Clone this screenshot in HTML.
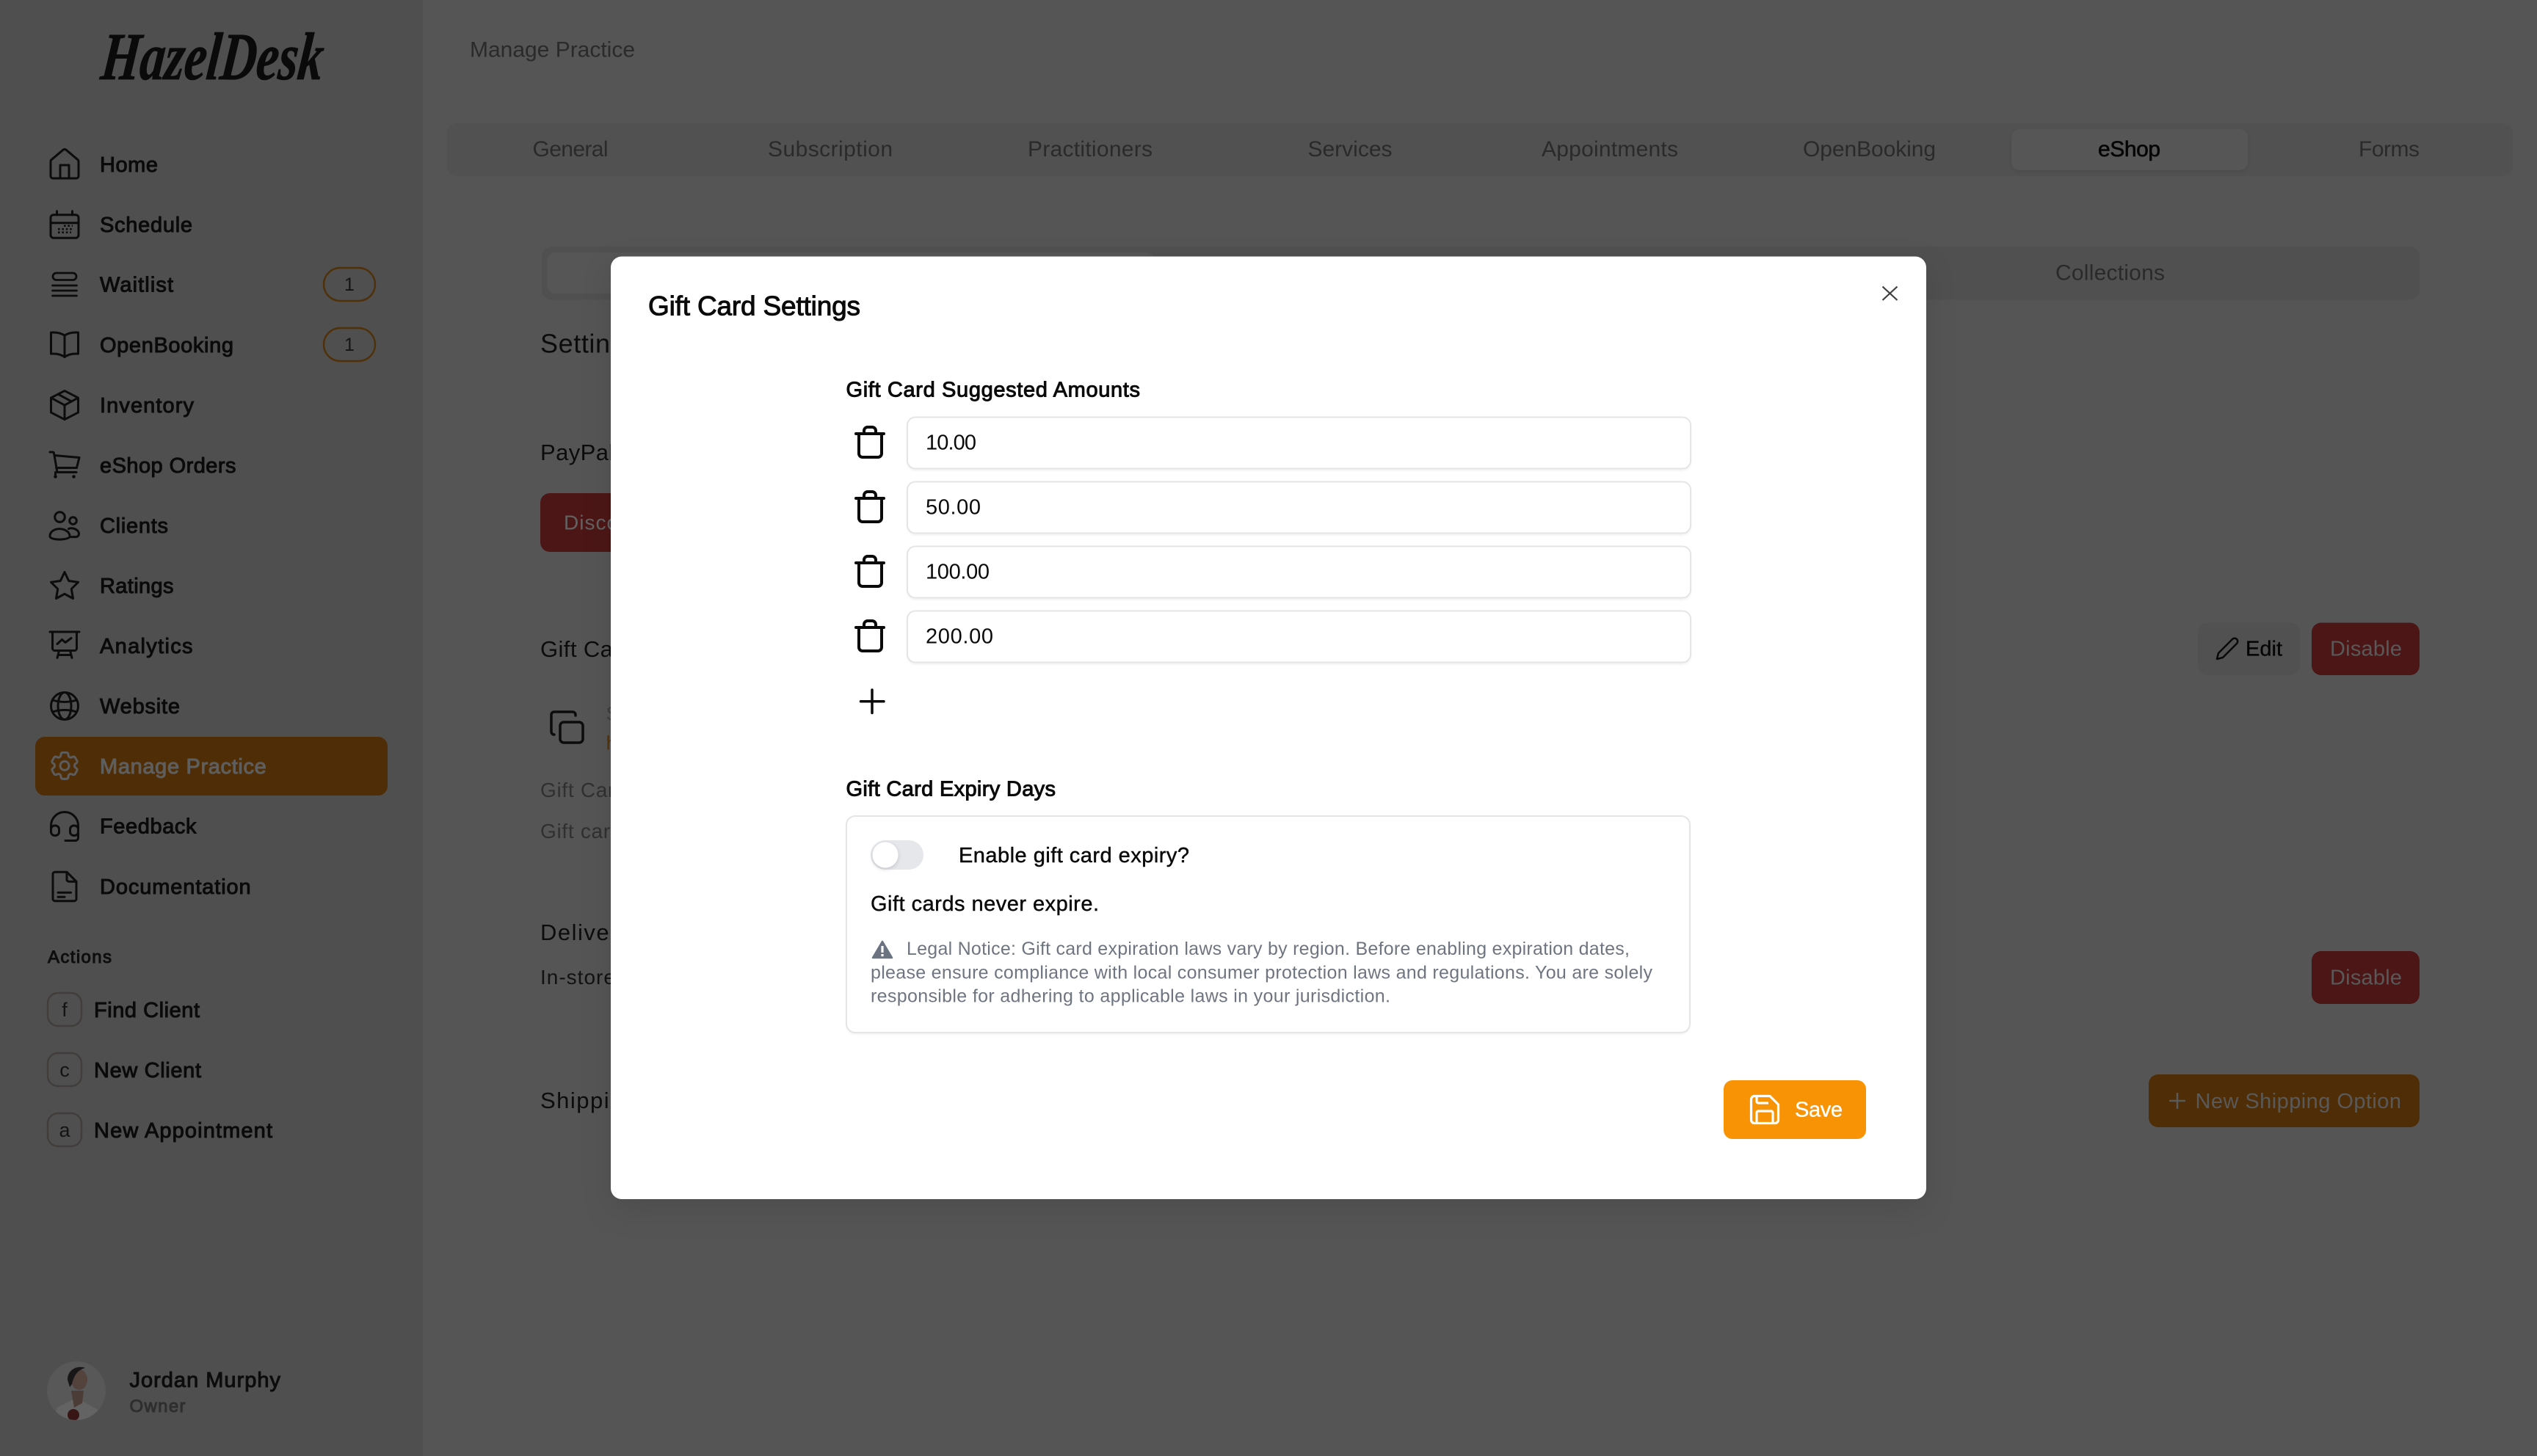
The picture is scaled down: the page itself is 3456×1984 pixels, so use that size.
<!DOCTYPE html>
<html lang="en"><head><meta charset="utf-8"><title>HazelDesk - Gift Card Settings</title>
<style>
html,body{margin:0;padding:0;background:#555;width:3456px;height:1984px;overflow:hidden}
svg{display:block}
text{font-family:"Liberation Sans",sans-serif;fill:currentColor;white-space:pre}
.m{stroke:currentColor;stroke-width:1px}
.n{font-size:29px;color:#0a0a0a}
.tab{font-size:30px;color:#2a2a2a}
.ic{fill:none;stroke:#0c0c0c;stroke-width:3;stroke-linecap:round;stroke-linejoin:round}
.bg32{font-size:31px;color:#0c0c0c;letter-spacing:1.2px}
.lab{font-size:29px;color:#0a0a0a}
.val{font-size:29px;color:#0a0a0a}
.leg{font-size:25px;color:#6f7580}
.tr{fill:none;stroke:#0a0a0a;stroke-width:4;stroke-linecap:round;stroke-linejoin:round}
</style></head><body>
<svg xmlns="http://www.w3.org/2000/svg" width="3456" height="1984" viewBox="0 0 3456 1984">
<defs>
<clipPath id="av"><circle cx="104" cy="1895" r="40"/></clipPath>
<g id="trash"><path class="tr" d="M1166 591H1204M1177 591V587a5 5 0 0 1 5-5h6a5 5 0 0 1 5 5V591M1170 591V618a5 5 0 0 0 5 5h21a5 5 0 0 0 5-5V591"/></g>
</defs>

<!-- backgrounds -->
<rect width="3456" height="1984" fill="#555"/>
<rect width="576" height="1984" fill="#4f4f4f"/>

<!-- logo -->
<text x="147" y="108" font-size="92" font-weight="700" font-style="italic" transform="skewX(-6)" style="font-family:'Liberation Serif',serif;color:#0a0a0a;stroke:currentColor;stroke-width:.8px" textLength="302" lengthAdjust="spacingAndGlyphs">HazelDesk</text>

<!-- nav active -->
<rect x="48" y="1004" width="480" height="80" rx="13" fill="#4f2e07"/>

<!-- nav icons -->
<g class="ic">
<g transform="translate(68,204)"><path d="M4 39a3 3 0 0 1-3-3V16a3 3 0 0 1 1-2.3L18 .2a3 3 0 0 1 4 0L38 13.7a3 3 0 0 1 1 2.3V36a3 3 0 0 1-3 3ZM14 39V21H26V39"/></g>
<g transform="translate(68,285.7)"><rect x="1" y="7" width="38" height="31.5" rx="4"/><path d="M1 18H39M9.5 2V7M30.5 2V7"/><path d="M11 31H29M11 26.500H31M19 22H31" stroke-width="2.600" stroke-dasharray="2.600 2.800" stroke-linecap="butt"/></g>
<g transform="translate(68,367)"><rect x="4" y="5" width="32" height="9.500" rx="4.700" stroke-width="2.800"/><path d="M3.500 22H36.500M3.500 29H36.500M3.500 36H36.500" stroke-width="2.800"/></g>
<g transform="translate(68,449.600)"><path d="M20 7.500C15 4 8 3 1.500 3.500V32.500C8 32 15 33 20 37C25 33 32 32 38.500 32.500V3.500C32 3 25 4 20 7.500ZM20 7.500V37"/></g>
<g transform="translate(68,531.600)"><path d="M20 1L38.500 10.500V30.500L20 40L1.500 30.500V10.500ZM1.500 10.500L20 20.500L38.500 10.500M20 20.500V40M11 5.500L29.500 15.500"/></g>
<g transform="translate(68,613.500)"><path d="M0 2.500H3.500A2 2 0 0 1 5.500 4L10 30H36M6 7L40 10L36.500 24H8.500"/><circle cx="7.500" cy="36" r="2.300" fill="#0c0c0c" stroke="none"/><circle cx="32.500" cy="36" r="2.300" fill="#0c0c0c" stroke="none"/><path d="M7.500 30V34"/></g>
<g transform="translate(68,695.600)"><circle cx="13.500" cy="9" r="6.800"/><circle cx="31.500" cy="14" r="4.800"/><path d="M0 35C0 29 6 25 13 25C20 25 27 29 27 35C27 38 20 39.500 13 39.500C6 39.500 0 38 0 35ZM25.500 25C28 23.500 33 24 36.500 26.500C41 30 40 35 36 36H27.500"/></g>
<g transform="translate(68,778)"><path d="M20 1.500L25.700 13.500L38.500 15.300L29.300 24.500L31.500 37.500L20 31.300L8.500 37.500L10.700 24.500L1.500 15.300L14.300 13.500Z"/></g>
<g transform="translate(68,859.500)"><path d="M0 1.500H40M3.500 1.500V24a3 3 0 0 0 3 3H33.500a3 3 0 0 0 3-3V1.500M10 18L16.500 12L21 16L29 10M12.500 27L10 37M27.500 27L30 37M11 33H29"/></g>
<g transform="translate(68,942)"><circle cx="20" cy="20" r="18.500"/><ellipse cx="20" cy="20" rx="9" ry="18.500"/><path d="M3.500 12Q20 17 36.500 12M3.500 28Q20 23 36.500 28"/></g>
<g transform="translate(68,1105)"><path d="M1.500 26V20A18.500 18.500 0 0 1 38.500 20V36.500a4 4 0 0 1-4 4H21"/><rect x="1.500" y="20" width="11" height="13.500" rx="5"/><rect x="27.500" y="20" width="11" height="13.500" rx="5"/></g>
<g transform="translate(68,1187.700)"><path d="M7 .5H23L36 13.500V37a3 3 0 0 1-3 3H7a3 3 0 0 1-3-3V3.500a3 3 0 0 1 3-3ZM23 .5V10a3 3 0 0 0 3 3.500H36M11 28.500H28.500M11 34.500H20"/></g>
</g>
<g transform="translate(64,1019.400) scale(2)" fill="none" stroke="#5c5c5c" stroke-width="1.500" stroke-linejoin="round"><path d="M9.594 3.94c.09-.542.56-.94 1.11-.94h2.593c.55 0 1.02.398 1.11.94l.213 1.281c.063.374.313.686.645.87.074.04.147.083.22.127.325.196.72.257 1.075.124l1.217-.456a1.125 1.125 0 0 1 1.37.49l1.296 2.247a1.125 1.125 0 0 1-.26 1.431l-1.003.827c-.293.241-.438.613-.43.992a7.723 7.723 0 0 1 0 .255c-.008.378.137.75.43.991l1.004.827c.424.35.534.955.26 1.43l-1.298 2.247a1.125 1.125 0 0 1-1.369.491l-1.217-.456c-.355-.133-.75-.072-1.076.124a6.47 6.47 0 0 1-.22.128c-.331.183-.581.495-.644.869l-.213 1.281c-.09.543-.56.94-1.11.94h-2.594c-.55 0-1.019-.398-1.11-.94l-.213-1.281c-.062-.374-.312-.686-.644-.87a6.52 6.52 0 0 1-.22-.127c-.325-.196-.72-.257-1.076-.124l-1.217.456a1.125 1.125 0 0 1-1.369-.49l-1.297-2.247a1.125 1.125 0 0 1 .26-1.431l1.004-.827c.292-.24.437-.613.43-.991a6.932 6.932 0 0 1 0-.255c.007-.38-.138-.751-.43-.992l-1.004-.827a1.125 1.125 0 0 1-.26-1.43l1.297-2.247a1.125 1.125 0 0 1 1.37-.491l1.216.456c.356.133.751.072 1.076-.124.072-.044.146-.086.22-.128.332-.183.582-.495.644-.869l.214-1.28Z"/><circle cx="12" cy="12" r="3"/></g>

<!-- nav text -->
<g class="n">
<text class="m" x="136" y="234" textLength="79">Home</text>
<text class="m" x="136" y="316" textLength="126">Schedule</text>
<text class="m" x="136" y="397.500" textLength="100">Waitlist</text>
<text class="m" x="136" y="480" textLength="182">OpenBooking</text>
<text class="m" x="136" y="562" textLength="128">Inventory</text>
<text class="m" x="136" y="644" textLength="185.500">eShop Orders</text>
<text class="m" x="136" y="726" textLength="93">Clients</text>
<text class="m" x="136" y="808" textLength="100.500">Ratings</text>
<text class="m" x="136" y="890" textLength="126.500">Analytics</text>
<text class="m" x="136" y="972" textLength="109">Website</text>
<text class="m" x="136" y="1054" textLength="226.800" style="color:#5e5e5e">Manage Practice</text>
<text class="m" x="136" y="1135.500" textLength="131.500">Feedback</text>
<text class="m" x="136" y="1218" textLength="205.700">Documentation</text>
</g>

<!-- badges -->
<rect x="441" y="365" width="70" height="45" rx="22.500" fill="none" stroke="#4f3009" stroke-width="2.400"/>
<text x="476" y="396" font-size="25" text-anchor="middle" style="color:#141414">1</text>
<rect x="441" y="447" width="70" height="45" rx="22.500" fill="none" stroke="#4f3009" stroke-width="2.400"/>
<text x="476" y="478" font-size="25" text-anchor="middle" style="color:#141414">1</text>

<!-- actions -->
<text class="m" x="65" y="1312" font-size="24" textLength="87" style="color:#0e0e0e">Actions</text>
<g fill="none" stroke="#403d3a" stroke-width="2.400">
<rect x="65" y="1353" width="46" height="45" rx="14"/>
<rect x="65" y="1435" width="46" height="45" rx="14"/>
<rect x="65" y="1517" width="46" height="45" rx="14"/>
</g>
<g font-size="27" text-anchor="middle" style="color:#141414">
<text x="88" y="1385">f</text><text x="88" y="1467">c</text><text x="88" y="1549">a</text>
</g>
<g class="n">
<text class="m" x="128" y="1386" textLength="144">Find Client</text>
<text class="m" x="128" y="1468" textLength="146">New Client</text>
<text class="m" x="128" y="1550" textLength="243">New Appointment</text>
</g>

<!-- avatar -->
<g clip-path="url(#av)">
<rect x="64" y="1855" width="80" height="80" fill="#585858"/>
<path d="M72 1935L78 1918L98 1908L110 1908L132 1920L140 1935Z" fill="#636363"/>
<path d="M97 1895L114 1895L112 1912L101 1918Z" fill="#4c3c37"/>
<ellipse cx="108" cy="1880" rx="11" ry="14" fill="#54423c"/>
<path d="M92 1880C92 1866 106 1860 116 1864C108 1866 101 1872 98 1886L95 1890Z" fill="#181616"/>
<circle cx="100" cy="1928" r="8" fill="#381616"/>
</g>
<text class="m" x="176.500" y="1890" font-size="29" textLength="205.500" style="color:#0c0c0c">Jordan Murphy</text>
<text class="m" x="176.500" y="1924" font-size="24" textLength="76" style="color:#2e2e2e">Owner</text>

<!-- main header -->
<text x="640" y="77.500" font-size="30" textLength="225" style="color:#2a2a2a">Manage Practice</text>

<!-- tabs -->
<rect x="609" y="168" width="2814" height="72" rx="14" fill="#515151"/>
<rect x="2740" y="176" width="322" height="56" rx="11" fill="#565656" style="filter:drop-shadow(0 2px 2px rgba(0,0,0,.08))"/>
<g class="tab">
<text x="725.500" y="213" textLength="103">General</text>
<text x="1046" y="213" textLength="170">Subscription</text>
<text x="1400" y="213" textLength="170">Practitioners</text>
<text x="1781.500" y="213" textLength="115">Services</text>
<text x="2100" y="213" textLength="186">Appointments</text>
<text x="2456" y="213" textLength="181">OpenBooking</text>
<text class="m" x="2858" y="213" textLength="85" style="color:#050505;stroke-width:.6px">eShop</text>
<text x="3213" y="213" textLength="83">Forms</text>
</g>

<!-- sub tabs -->
<rect x="738" y="336" width="2558" height="72.500" rx="14" fill="#505050"/>
<rect x="745.500" y="344" width="827.500" height="56" rx="11" fill="#565656"/>
<text x="2800" y="381.700" font-size="30" textLength="149" style="color:#2a2a2a">Collections</text>

<!-- background content -->
<text x="736" y="480.500" font-size="36" letter-spacing=".6" style="color:#0c0c0c">Settin</text>
<text class="bg32" x="736" y="627" style="letter-spacing:.4px">PayPal</text>
<rect x="736" y="672" width="200" height="80" rx="13" fill="#4c1616"/>
<text x="768" y="721.500" font-size="28" letter-spacing="1" style="color:#626262">Disconnect</text>
<text class="bg32" x="736" y="895" style="letter-spacing:.4px">Gift Cards</text>
<g fill="none" stroke="#0c0c0c" stroke-width="3.500" stroke-linecap="round" stroke-linejoin="round">
<rect x="763" y="984" width="31" height="28" rx="5"/>
<path d="M784 975V974a4 4 0 0 0-4-4H755a4 4 0 0 0-4 4V997a4 4 0 0 0 4 4"/>
</g>
<text x="825.500" y="981.500" font-size="27" style="color:#3e3e3e">S</text>
<text x="825.500" y="1021.500" font-size="27" style="color:#543308">h</text>
<text x="736" y="1086" font-size="28" letter-spacing=".7" style="color:#303030">Gift Card</text>
<text x="736" y="1142" font-size="28" letter-spacing=".7" style="color:#303030">Gift card</text>
<text class="bg32" x="736" y="1281" style="letter-spacing:1.5px">Delivery</text>
<text x="736" y="1341" font-size="28" letter-spacing="1" style="color:#121212">In-store</text>
<text class="bg32" x="736" y="1510" style="letter-spacing:1.5px">Shipping</text>

<!-- right buttons -->
<rect x="2994" y="848.500" width="139" height="71.500" rx="13" fill="#515151"/>
<path d="M3020 898l2-8L3041 871a4 4 0 0 1 6 6L3028 896Z" fill="none" stroke="#080808" stroke-width="2.500" stroke-linejoin="round"/>
<text x="3059" y="893.500" font-size="29" textLength="50" style="color:#050505;stroke:currentColor;stroke-width:.3px">Edit</text>
<rect x="3149" y="848.500" width="147" height="71.500" rx="13" fill="#4c1616"/>
<text x="3174" y="893.500" font-size="29" textLength="98" style="color:#595959">Disable</text>
<rect x="3149" y="1296" width="147" height="72" rx="13" fill="#4c1616"/>
<text x="3174" y="1341.500" font-size="29" textLength="98" style="color:#595959">Disable</text>
<rect x="2927" y="1464" width="369" height="72" rx="13" fill="#4f2e07"/>
<path d="M2966 1489V1511M2955 1500H2977" stroke="#595959" stroke-width="2.500" fill="none"/>
<text x="2990.500" y="1510" font-size="29" textLength="280.500" style="color:#595959">New Shipping Option</text>

<!-- modal -->
<rect x="832" y="349.500" width="1792" height="1284.500" rx="15" fill="#fff" style="filter:drop-shadow(0 14px 20px rgba(0,0,0,.1))"/>
<text class="m" x="883" y="429.500" font-size="37" textLength="289" style="color:#0a0a0a;stroke-width:1px">Gift Card Settings</text>
<path d="M2564.500 390.500L2584.500 409M2584.500 390.500L2564.500 409" stroke="#3f3f3f" stroke-width="2.200" fill="none"/>

<text class="lab m" x="1152.500" y="540.500" textLength="400.500">Gift Card Suggested Amounts</text>

<g fill="#fff" stroke="#e5e5e5" stroke-width="2" style="filter:drop-shadow(0 2px 1px rgba(0,0,0,.05))">
<rect x="1236" y="568.500" width="1067" height="70" rx="11"/>
<rect x="1236" y="656.500" width="1067" height="70" rx="11"/>
<rect x="1236" y="744.500" width="1067" height="70" rx="11"/>
<rect x="1236" y="832.500" width="1067" height="70" rx="11"/>
</g>
<g class="val">
<text x="1261" y="612.500" textLength="69">10.00</text>
<text x="1261" y="700.500" textLength="75">50.00</text>
<text x="1261" y="788.500" textLength="87">100.00</text>
<text x="1261" y="876.500" textLength="92">200.00</text>
</g>
<use href="#trash"/><use href="#trash" y="88"/><use href="#trash" y="176"/><use href="#trash" y="264"/>
<path d="M1188 940V971.500M1172.500 955.700H1204" stroke="#0a0a0a" stroke-width="3.500" stroke-linecap="round" fill="none"/>

<text class="lab m" x="1152.500" y="1084.500" textLength="285.500">Gift Card Expiry Days</text>
<rect x="1153" y="1112" width="1149" height="295" rx="12" fill="#fff" stroke="#e5e5e5" stroke-width="2" style="filter:drop-shadow(0 2px 1px rgba(0,0,0,.04))"/>
<rect x="1186" y="1145" width="72" height="40" rx="20" fill="#e5e7eb"/>
<circle cx="1206" cy="1165" r="17.500" fill="#fff" style="filter:drop-shadow(0 2px 3px rgba(0,0,0,.15))"/>
<text class="val" x="1306" y="1175" textLength="314" style="stroke:currentColor;stroke-width:.45px">Enable gift card expiry?</text>
<text class="val" x="1186" y="1241" textLength="311" style="stroke:currentColor;stroke-width:.45px">Gift cards never expire.</text>
<path d="M1202 1283L1215 1305H1189Z" fill="#6b7280" stroke="#6b7280" stroke-width="2.500" stroke-linejoin="round"/>
<rect x="1200.400" y="1289" width="3.200" height="9" fill="#fff"/><rect x="1200.400" y="1300" width="3.200" height="3.200" fill="#fff"/>
<g class="leg">
<text x="1235" y="1301" textLength="985">Legal Notice: Gift card expiration laws vary by region. Before enabling expiration dates,</text>
<text x="1186" y="1333.500" textLength="1065">please ensure compliance with local consumer protection laws and regulations. You are solely</text>
<text x="1186" y="1365.500" textLength="708">responsible for adhering to applicable laws in your jurisdiction.</text>
</g>

<!-- save -->
<rect x="2348" y="1472" width="194" height="80" rx="12" fill="#f79305"/>
<path d="M2390 1493.500H2411L2422.500 1505V1526a4.500 4.500 0 0 1-4.500 4.500H2390a4.500 4.500 0 0 1-4.500-4.500V1498a4.500 4.500 0 0 1 4.500-4.500ZM2393 1494V1501a2 2 0 0 0 2 2H2409M2393 1530V1516a2 2 0 0 1 2-2H2413a2 2 0 0 1 2 2V1530" fill="none" stroke="#fff" stroke-width="3.200" stroke-linejoin="round"/>
<text class="m" x="2445" y="1521.700" font-size="29" textLength="65" style="color:#fff;stroke-width:.4px">Save</text>
</svg>
</body></html>
